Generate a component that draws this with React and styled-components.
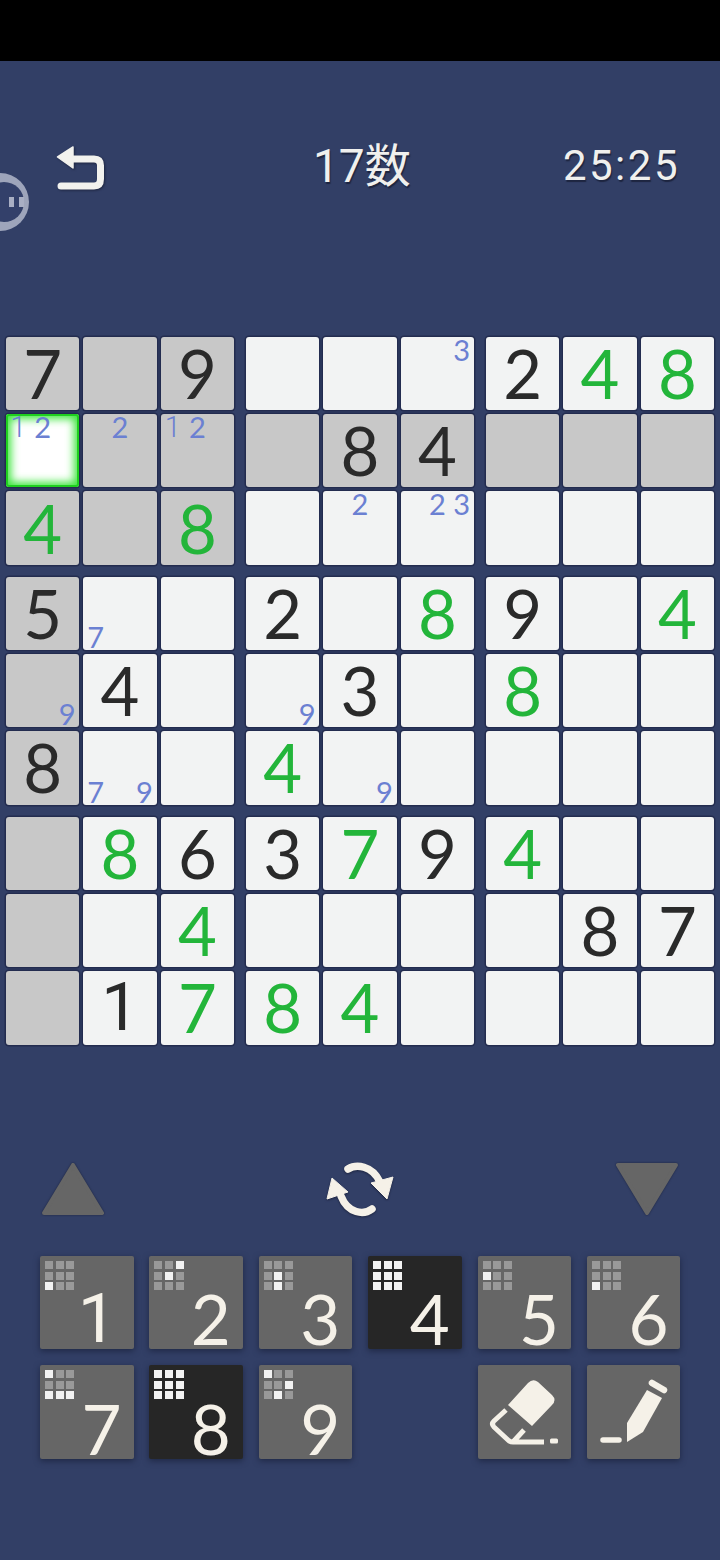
import React from "react";
import styled, { createGlobalStyle } from "styled-components";

const GlobalStyle = createGlobalStyle`
  html, body {
    margin: 0;
    padding: 0;
    background: #323f66;
  }
`;

const Page = styled.div`
  position: relative;
  width: 720px;
  height: 1560px;
  overflow: hidden;
  background: #323f66;
  font-family: Lato, "Noto Sans CJK JP", sans-serif;
`;

const StatusBar = styled.div`
  height: 61px;
  background: #000;
`;

const Header = styled.div`
  display: grid;
  grid-template-columns: 257px auto 1fr;
  align-items: start;
  height: 275.7px;
  padding: 85px 40px 0 56px;
  box-sizing: border-box;
`;

const Title = styled.div`
  color: #f0f0ee;
  font-family: Roboto, "Noto Sans CJK JP", sans-serif;
  font-size: 46px;
  line-height: 40px;
  font-weight: 400;
  text-shadow: 1px 2px 1px #1d2540;
`;

const Timer = styled.div`
  justify-self: end;
  color: #f0f0ee;
  font-family: Roboto, sans-serif;
  font-size: 42px;
  line-height: 40px;
  letter-spacing: 2.5px;
  text-shadow: 1px 2px 1px #1d2540;
`;

const BackButton = styled.svg`
  width: 50px;
  height: 46px;
  filter: drop-shadow(1px 1px 1px #1d2540);
`;

const FloatingBall = styled.div`
  position: absolute;
  left: -29px;
  top: 173px;
  width: 58px;
  height: 58px;
  border-radius: 50%;
  background: #9ea5bb;
  display: flex;
  justify-content: center;
  align-items: center;
`;

const BallFace = styled.div`
  width: 40px;
  height: 40px;
  margin-left: 8px;
  border-radius: 50%;
  background: #33406a;
  box-sizing: border-box;
  display: flex;
  justify-content: center;
  align-items: center;
  gap: 5px;
  padding-left: 25px;
`;

const BallEye = styled.span`
  flex: none;
  width: 5px;
  height: 10px;
  background: #a9afc4;
`;

const Board = styled.div`
  display: grid;
  grid-template-columns: repeat(3, 228px);
  gap: 12px;
  padding-left: 6px;
`;

const Box = styled.div`
  display: grid;
  grid-template-columns: repeat(3, 73.33px);
  grid-auto-rows: 73.33px;
  gap: 4px;
`;

const Cell = styled.div`
  position: relative;
  display: flex;
  align-items: center;
  justify-content: center;
  border-radius: 3px;
  background: ${(p) => (p.$selected ? "#fff" : p.$shaded ? "#c8c8c8" : "#f2f3f3")};
  box-shadow: ${(p) =>
    p.$selected
      ? "inset 0 0 0 2px #1fd01f, inset 0 0 8px 5px #3fe63f, 0 0 0 1.5px #232c4f"
      : "0 0 0 1.5px #232c4f"};
`;

const Digit = styled.span`
  font-family: ${(p) => (p.$one ? "Roboto, sans-serif" : "Lato, sans-serif")};
  font-size: 67px;
  line-height: 1;
  color: ${(p) => (p.$given ? "#2a2a2a" : "#23b53a")};
`;

const Notes = styled.div`
  position: absolute;
  inset: 2px 0;
  display: grid;
  grid-template-columns: repeat(3, 1fr);
  grid-template-rows: repeat(3, 1fr);
`;

const Note = styled.span`
  grid-column: ${(p) => p.$col};
  grid-row: ${(p) => p.$row};
  align-self: ${(p) => (p.$row === 1 ? "start" : "end")};
  justify-self: center;
  font-family: ${(p) => (p.$one ? "Roboto, sans-serif" : "Lato, sans-serif")};
  font-size: 29px;
  font-weight: ${(p) => (p.$one ? 300 : 400)};
  line-height: 22px;
  color: #6b80d2;
`;

const Controls = styled.div`
  display: flex;
  align-items: center;
  justify-content: space-between;
  height: 60px;
  margin-top: 114.3px;
  padding: 0 41px;
`;

const Triangle = styled.svg`
  width: 64px;
  height: 56px;
  filter: drop-shadow(0 0 1px #1d2540);
`;

const RefreshIcon = styled.svg`
  width: 70px;
  height: 64px;
  filter: drop-shadow(0 1px 1px #1d2540);
`;

const Keypad = styled.div`
  display: grid;
  grid-template-columns: repeat(6, 93.5px);
  grid-auto-rows: 93.5px;
  gap: 15.7px 15.9px;
  margin-top: 37px;
  padding-left: 40px;
`;

const Key = styled.div`
  position: relative;
  display: flex;
  align-items: flex-end;
  justify-content: flex-end;
  padding: 0 ${(p) => (p.$one ? 17 : 12)}px 5px 0;
  box-sizing: border-box;
  border-radius: 2px;
  background: ${(p) => (p.$active ? "#262626" : "#666")};
  box-shadow: 0 2px 6px #1f2845;
  color: #f5f1e8;
  font-family: ${(p) => (p.$one ? "Roboto, sans-serif" : "Lato, sans-serif")};
  font-size: 69px;
  line-height: 50px;
`;

const ToolKey = styled(Key)`
  padding: 0;
`;

const ToolIcon = styled.svg`
  width: 93.5px;
  height: 93.5px;
`;

const KeyGap = styled.div``;

const MiniGrid = styled.div`
  position: absolute;
  left: 5px;
  top: 5px;
  display: grid;
  grid-template-columns: repeat(3, 8px);
  grid-auto-rows: 8px;
  gap: 2.67px;
`;

const MiniSquare = styled.span`
  background: ${(p) => (p.$lit ? "#f2f2f2" : "#999")};
`;

// k = printed clue, g = player's own entry
const board = [
  ["7k", "", "9k", "", "", "", "2k", "4g", "8g"],
  ["", "", "", "", "8k", "4k", "", "", ""],
  ["4g", "", "8g", "", "", "", "", "", ""],
  ["5k", "", "", "2k", "", "8g", "9k", "", "4g"],
  ["", "4k", "", "", "3k", "", "8g", "", ""],
  ["8k", "", "", "4g", "", "", "", "", ""],
  ["", "8g", "6k", "3k", "7g", "9k", "4g", "", ""],
  ["", "", "4g", "", "", "", "", "8k", "7k"],
  ["", "1k", "7g", "8g", "4g", "", "", "", ""],
];

const notes = {
  "0,5": [3],
  "1,0": [1, 2],
  "1,1": [2],
  "1,2": [1, 2],
  "2,4": [2],
  "2,5": [2, 3],
  "3,1": [7],
  "4,0": [9],
  "4,3": [9],
  "5,1": [7, 9],
  "5,4": [9],
};

const isShaded = (r, c) => r === 1 || c === 0 || (r < 3 && c < 3);

const keyLights = {
  1: [6],
  2: [2, 4],
  3: [4, 7],
  4: [0, 1, 2, 3, 4, 5, 6, 7, 8],
  5: [3],
  6: [6],
  7: [0, 6, 7, 8],
  8: [0, 1, 2, 3, 4, 5, 6, 7, 8],
  9: [0, 5, 7],
};

const BoxCell = ({ r, c }) => {
  const value = board[r][c];
  const marks = notes[`${r},${c}`];
  return (
    <Cell $shaded={isShaded(r, c)} $selected={r === 1 && c === 0}>
      {value && (
        <Digit $given={value[1] === "k"} $one={value[0] === "1"}>
          {value[0]}
        </Digit>
      )}
      {marks && (
        <Notes>
          {marks.map((n) => (
            <Note
              key={n}
              $one={n === 1}
              $col={((n - 1) % 3) + 1}
              $row={Math.floor((n - 1) / 3) + 1}
            >
              {n}
            </Note>
          ))}
        </Notes>
      )}
    </Cell>
  );
};

const NumberKey = ({ n }) => (
  <Key $active={n === 4 || n === 8} $one={n === 1}>
    <MiniGrid>
      {Array.from({ length: 9 }, (_, i) => (
        <MiniSquare key={i} $lit={keyLights[n].includes(i)} />
      ))}
    </MiniGrid>
    {n}
  </Key>
);

const App = () => {
  const boxes = [];
  for (let br = 0; br < 3; br++) {
    for (let bc = 0; bc < 3; bc++) {
      const cells = [];
      for (let r = br * 3; r < br * 3 + 3; r++) {
        for (let c = bc * 3; c < bc * 3 + 3; c++) {
          cells.push(<BoxCell key={`${r}-${c}`} r={r} c={c} />);
        }
      }
      boxes.push(<Box key={`${br}-${bc}`}>{cells}</Box>);
    }
  }

  return (
    <Page>
      <GlobalStyle />
      <StatusBar />
      <Header>
        <BackButton viewBox="0 0 50 46">
          <path
            d="M15 13 H38 Q44.5 13 44.5 19.5 V33 Q44.5 40 38 40 H5"
            fill="none"
            stroke="#f2f2ee"
            strokeWidth="7"
            strokeLinecap="round"
            strokeLinejoin="round"
          />
          <path d="M17 1 V22 L1.5 11 Z" fill="#f2f2ee" stroke="#f2f2ee" strokeWidth="1.5" strokeLinejoin="round" />
        </BackButton>
        <Title>17数</Title>
        <Timer>25:25</Timer>
      </Header>
      <FloatingBall>
        <BallFace>
          <BallEye />
          <BallEye />
        </BallFace>
      </FloatingBall>
      <Board>{boxes}</Board>
      <Controls>
        <Triangle viewBox="0 0 64 56">
          <path d="M32 4 L61 52 H3 Z" fill="#666" stroke="#666" strokeWidth="4" strokeLinejoin="round" />
        </Triangle>
        <RefreshIcon viewBox="15 13 70 64">
          <g fill="none" stroke="#f5f1e8" strokeWidth="7.5" strokeLinecap="round">
            <path d="M38 25 C46 20 62 21 70 38" />
            <path d="M62 65 C54 71 38 70 31 52" />
          </g>
          <path d="M83 33 L77 55 L61 39 Z" fill="#f5f1e8" stroke="#f5f1e8" strokeWidth="1" strokeLinejoin="round" />
          <path d="M22 34 L17 55 L38 48 Z" fill="#f5f1e8" stroke="#f5f1e8" strokeWidth="1" strokeLinejoin="round" />
        </RefreshIcon>
        <Triangle viewBox="0 0 64 56">
          <path d="M3 4 H61 L32 52 Z" fill="#666" stroke="#666" strokeWidth="4" strokeLinejoin="round" />
        </Triangle>
      </Controls>
      <Keypad>
        {[1, 2, 3, 4, 5, 6, 7, 8, 9].map((n) => (
          <NumberKey key={n} n={n} />
        ))}
        <KeyGap />
        <ToolKey>
          <ToolIcon viewBox="0 0 93.5 93.5">
            <path d="M50 18 Q55 13 60 17 L74 30 Q79 35 74 40 L54 61 L30 40 Z" fill="#f5f1e8" />
            <path
              d="M28 45 L16 56 Q13 59 16 62 L30 75 Q32 77 35 77 H66 M46 65 L35 77"
              fill="none"
              stroke="#f5f1e8"
              strokeWidth="5"
              strokeLinejoin="round"
            />
            <rect x="72" y="73.5" width="8" height="5" rx="1.5" fill="#f5f1e8" />
          </ToolIcon>
        </ToolKey>
        <ToolKey>
          <ToolIcon viewBox="0 0 93.5 93.5">
            <path d="M60 25 L75 33 L56 67 L40 77 L40 58 Z" fill="#f5f1e8" />
            <path d="M65 18 L77 25" stroke="#f5f1e8" strokeWidth="6.5" strokeLinecap="round" />
            <path d="M16 75 H32" stroke="#f5f1e8" strokeWidth="5.5" strokeLinecap="round" />
          </ToolIcon>
        </ToolKey>
      </Keypad>
    </Page>
  );
};

export default App;
